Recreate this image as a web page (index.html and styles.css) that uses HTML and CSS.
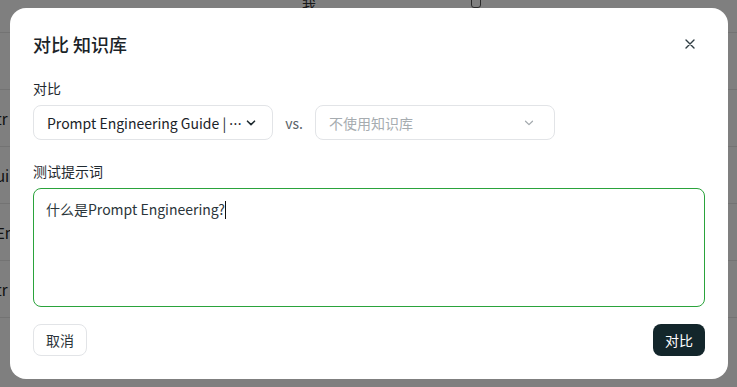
FILE: index.html
```html
<!DOCTYPE html>
<html lang="zh">
<head>
<meta charset="utf-8">
<title>对比 知识库</title>
<link rel="stylesheet" href="styles.css">
</head>
<body>
<div class="page">
  <div class="head-row"><span class="h-me">我</span><span class="h-icon"></span></div>
  <div class="row"></div>
  <div class="row"><span class="cell">tr</span></div>
  <div class="row"><span class="cell">ui</span></div>
  <div class="row"><span class="cell">En</span></div>
  <div class="row"><span class="cell">tr</span></div>
</div>
<div class="overlay"></div>
<div class="modal">
  <div class="modal-head">
    <h2 class="title">对比 知识库</h2>
    <svg class="close" width="10" height="10" viewBox="0 0 10 10"><path d="M1 1L9 9M9 1L1 9" stroke="#2f3d43" stroke-width="1.4" stroke-linecap="round"/></svg>
  </div>
  <div class="label">对比</div>
  <div class="compare-row">
    <div class="select">
      <span class="sel-text">Prompt Engineering Guide | <span class="dots">···</span></span>
      <svg class="chev" width="10" height="6" viewBox="0 0 10 6"><path d="M1.5 1.2L5 4.6L8.5 1.2" fill="none" stroke="#1f2b30" stroke-width="1.6" stroke-linecap="round" stroke-linejoin="round"/></svg>
    </div>
    <span class="vs">vs.</span>
    <div class="select select-empty">
      <span class="placeholder">不使用知识库</span>
      <svg class="chev" width="10" height="6" viewBox="0 0 10 6"><path d="M1.5 1.2L5 4.6L8.5 1.2" fill="none" stroke="#a3a9ad" stroke-width="1.2" stroke-linecap="round" stroke-linejoin="round"/></svg>
    </div>
  </div>
  <div class="label label-2">测试提示词</div>
  <div class="prompt">什么是Prompt Engineering?<span class="caret"></span></div>
  <div class="footer">
    <button class="btn btn-cancel">取消</button>
    <button class="btn btn-primary">对比</button>
  </div>
</div>
</body>
</html>
```

FILE: styles.css
```css
* { box-sizing: border-box; }
html, body { margin: 0; padding: 0; }
body {
  width: 737px;
  height: 387px;
  overflow: hidden;
  background: #ffffff;
  font-family: "Noto Sans CJK SC", "Noto Sans", sans-serif;
  color: #1f2a30;
}
.page { width: 737px; }
.head-row {
  height: 33px;
  border-bottom: 1px solid #e6e6e6;
  position: relative;
}
.h-me {
  position: absolute;
  left: 302px;
  top: -6px;
  font-size: 14px;
  color: #333;
}
.h-icon {
  position: absolute;
  left: 471px;
  top: -4px;
  width: 10px;
  height: 12px;
  border: 1.5px solid #555;
  border-radius: 3px;
}
.row {
  height: 57px;
  border-bottom: 1px solid #e6e6e6;
  display: flex;
  align-items: center;
}
.cell {
  font-size: 15px;
  color: #222;
  margin-left: -4px;
}
.overlay {
  position: fixed;
  inset: 0;
  background: rgba(0, 0, 0, 0.5);
}
.modal {
  position: fixed;
  left: 10px;
  top: 8px;
  width: 718px;
  height: 371px;
  background: #fff;
  border-radius: 16px;
  padding: 24px 23px 23px;
  display: flex;
  flex-direction: column;
}
.modal-head {
  display: flex;
  align-items: center;
  justify-content: space-between;
  height: 24px;
}
.title {
  margin: 0;
  font-size: 18px;
  font-weight: 500;
  line-height: 24px;
  color: #1b2328;
}
.close { margin-right: 10px; }
.label {
  margin-top: 22px;
  font-size: 14px;
  line-height: 20px;
  color: #1f2a30;
}
.label-2 { margin-top: 21px; }
.compare-row {
  margin-top: 7px;
  display: flex;
  align-items: center;
}
.select {
  width: 240px;
  height: 35px;
  border: 1px solid #e2e4e7;
  border-radius: 8px;
  display: flex;
  align-items: center;
  justify-content: space-between;
  padding: 0 16px 0 13px;
  font-size: 14px;
}
.sel-text { color: #1b2328; white-space: nowrap; }
.dots {
  font-family: "Noto Sans", sans-serif;
  letter-spacing: 0.5px;
}
.vs {
  width: 42px;
  text-align: center;
  font-size: 14px;
  color: #5a6469;
}
.select-empty { padding-right: 20px; }
.placeholder { color: #a6acb0; font-size: 14px; }
.prompt {
  margin-top: 7px;
  height: 119px;
  border: 1px solid #2aa33b;
  border-radius: 8px;
  padding: 9px 12px;
  font-size: 14px;
  line-height: 22px;
  color: #2b353a;
}
.caret {
  display: inline-block;
  width: 1px;
  height: 18px;
  background: #111;
  vertical-align: -4px;
}
.footer {
  margin-top: 17px;
  display: flex;
  justify-content: space-between;
}
.btn {
  height: 32px;
  border-radius: 8px;
  font-family: inherit;
  font-size: 14px;
  line-height: 20px;
  cursor: pointer;
}
.btn-cancel {
  width: 54px;
  background: #fff;
  border: 1px solid #e2e4e7;
  color: #2b353a;
}
.btn-primary {
  width: 52px;
  background: #13262b;
  border: none;
  color: #fff;
}
```
